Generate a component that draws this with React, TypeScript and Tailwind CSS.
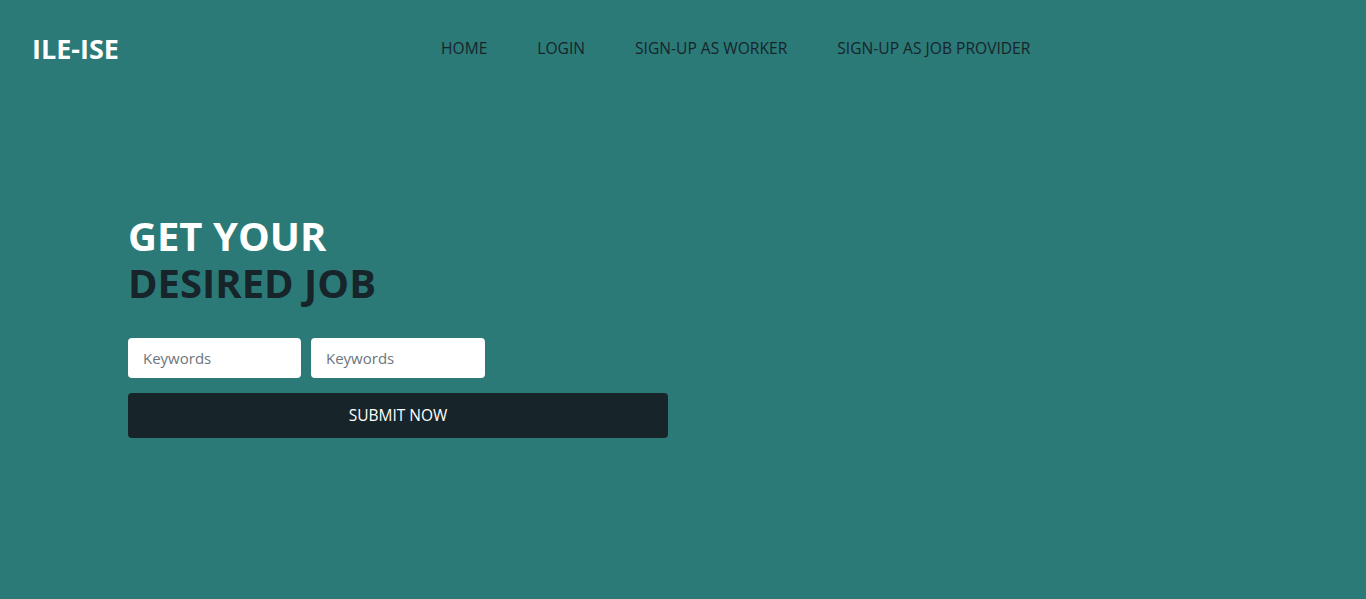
export default function App() {
  return (
    <div
      className="min-h-[599px] w-full bg-[#2b7a78]"
      style={{ fontFamily: '"Open Sans", "Noto Sans", sans-serif' }}
    >
      <header className="flex h-[98px] items-center px-[32px]">
        <div className="w-[409px] text-[27px] font-bold text-white">ILE-ISE</div>
        <nav className="flex gap-[50px] text-[15.6px] text-[#17252a]">
          <a href="#">HOME</a>
          <a href="#">LOGIN</a>
          <a href="#">SIGN-UP AS WORKER</a>
          <a href="#">SIGN-UP AS JOB PROVIDER</a>
        </nav>
      </header>

      <section className="ml-[128px] pt-[114px]">
        <h1 className="text-[40px] leading-[47px] font-bold">
          <span className="block text-white">GET YOUR</span>
          <span className="block text-[#17252a]">DESIRED JOB</span>
        </h1>

        <div className="mt-[32px] flex gap-[10px]">
          <input
            placeholder="Keywords"
            className="h-[40px] w-[173px] rounded-[4px] bg-white px-[15px] text-[15px] text-[#17252a] outline-none placeholder:text-[#6c757d]"
          />
          <input
            placeholder="Keywords"
            className="h-[40px] w-[174px] rounded-[4px] bg-white px-[15px] text-[15px] text-[#17252a] outline-none placeholder:text-[#6c757d]"
          />
        </div>

        <button className="mt-[15px] h-[45px] w-[540px] rounded-[4px] bg-[#17252a] text-[15.5px] text-white">
          SUBMIT NOW
        </button>
      </section>
    </div>
  )
}
